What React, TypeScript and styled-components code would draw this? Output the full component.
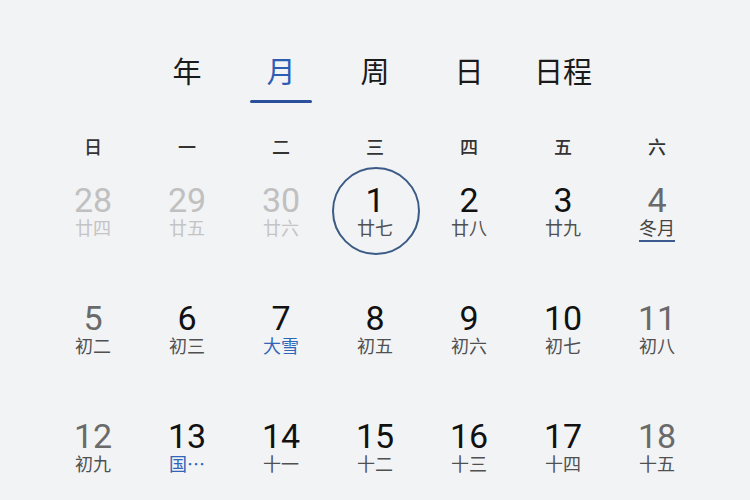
import React from 'react';
import styled, { createGlobalStyle } from 'styled-components';

type Tone = 'normal' | 'weekend' | 'faded';
type Mark = 'none' | 'festival' | 'month';

type Day = {
  num: number,
  lunar: string,
  tone: Tone,
  mark?: Mark,
  today?: boolean,
};

const tabs = ['年', '月', '周', '日', '日程'];
const weekdays = ['日', '一', '二', '三', '四', '五', '六'];

const weeks: Day[][] = [
  [
    { num: 28, lunar: '廿四', tone: 'faded' },
    { num: 29, lunar: '廿五', tone: 'faded' },
    { num: 30, lunar: '廿六', tone: 'faded' },
    { num: 1, lunar: '廿七', tone: 'normal', today: true },
    { num: 2, lunar: '廿八', tone: 'normal' },
    { num: 3, lunar: '廿九', tone: 'normal' },
    { num: 4, lunar: '冬月', tone: 'weekend', mark: 'month' },
  ],
  [
    { num: 5, lunar: '初二', tone: 'weekend' },
    { num: 6, lunar: '初三', tone: 'normal' },
    { num: 7, lunar: '大雪', tone: 'normal', mark: 'festival' },
    { num: 8, lunar: '初五', tone: 'normal' },
    { num: 9, lunar: '初六', tone: 'normal' },
    { num: 10, lunar: '初七', tone: 'normal' },
    { num: 11, lunar: '初八', tone: 'weekend' },
  ],
  [
    { num: 12, lunar: '初九', tone: 'weekend' },
    { num: 13, lunar: '国…', tone: 'normal', mark: 'festival' },
    { num: 14, lunar: '十一', tone: 'normal' },
    { num: 15, lunar: '十二', tone: 'normal' },
    { num: 16, lunar: '十三', tone: 'normal' },
    { num: 17, lunar: '十四', tone: 'normal' },
    { num: 18, lunar: '十五', tone: 'weekend' },
  ],
];

const numColor: Record<Tone, string> = {
  normal: '#111111',
  weekend: '#6a6a6a',
  faded: '#c0c0c0',
};

const lunarColor: Record<Tone, string> = {
  normal: '#505050',
  weekend: '#505050',
  faded: '#c4c4c4',
};

export default () => {
  return (
    <Page>
      <GlobalStyle />
      <Tabs>
        {tabs.map((t, i) => (
          <Tab key={t} col={i + 2}>
            <TabLabel active={t === '月'}>{t}</TabLabel>
            <TabLine active={t === '月'} />
          </Tab>
        ))}
      </Tabs>
      <WeekHeader>
        {weekdays.map(w => <WeekName key={w}>{w}</WeekName>)}
      </WeekHeader>
      {weeks.map((week, r) => (
        <WeekRow key={r}>
          {week.map(d => (
            <Cell key={d.num}>
              <DayBody today={!!d.today}>
                <DayNum tone={d.tone}>{d.num}</DayNum>
                <Lunar tone={d.tone} mark={d.mark || 'none'}>{d.lunar}</Lunar>
              </DayBody>
            </Cell>
          ))}
        </WeekRow>
      ))}
    </Page>
  );
};

const GlobalStyle = createGlobalStyle`
  html, body {
    margin: 0;
    padding: 0;
    background: #f2f3f5;
  }
  body {
    font-family: "Noto Sans CJK SC", "Noto Sans", sans-serif;
  }
`;

const Page = styled.div`
  width: 750px;
  height: 500px;
  overflow: hidden;
  background: #f2f3f5;
  padding: 50px 46px 0;
  box-sizing: border-box;
`;

const Tabs = styled.div`
  display: grid;
  grid-template-columns: repeat(7, 94px);
  height: 53px;
`;

const Tab = styled.div<{ col: number }>`
  grid-column: ${p => p.col};
  display: flex;
  flex-direction: column;
  align-items: center;
`;

const TabLabel = styled.div<{ active: boolean }>`
  font-size: 29px;
  line-height: 40px;
  color: ${p => p.active ? '#2c5cb4' : '#1a1a1a'};
  white-space: nowrap;
`;

const TabLine = styled.div<{ active: boolean }>`
  margin-top: 10px;
  width: 62px;
  height: 3px;
  border-radius: 2px;
  background: ${p => p.active ? '#2a4f9c' : 'transparent'};
`;

const WeekHeader = styled.div`
  display: grid;
  grid-template-columns: repeat(7, 94px);
  margin-top: 31px;
`;

const WeekName = styled.div`
  text-align: center;
  font-size: 18px;
  font-weight: 500;
  line-height: 24px;
  color: #333333;
`;

const WeekRow = styled.div`
  display: grid;
  grid-template-columns: repeat(7, 94px);
  height: 118px;
`;

const Cell = styled.div`
  display: flex;
  justify-content: center;
  padding-top: 25px;
`;

const DayBody = styled.div<{ today: boolean }>`
  position: relative;
  display: flex;
  flex-direction: column;
  align-items: center;
  height: 54px;
  &::before {
    content: '';
    display: ${p => p.today ? 'block' : 'none'};
    position: absolute;
    left: 50%;
    top: 50%;
    width: 84px;
    height: 84px;
    margin: -43px 0 0 -43px;
    border: 2px solid #3b5b86;
    border-radius: 50%;
  }
`;

const DayNum = styled.div<{ tone: Tone }>`
  font-family: Roboto, "Noto Sans", sans-serif;
  font-size: 34px;
  line-height: 34px;
  color: ${p => numColor[p.tone]};
`;

const Lunar = styled.div<{ tone: Tone, mark: Mark }>`
  font-size: 18px;
  line-height: 20px;
  color: ${p => p.mark === 'festival' ? '#2f66b8' : p.mark === 'month' ? '#444444' : lunarColor[p.tone]};
  text-decoration: ${p => p.mark === 'month' ? 'underline' : 'none'};
  text-decoration-color: #3b5b8e;
  text-decoration-thickness: 2px;
  text-underline-offset: 5px;
`;
